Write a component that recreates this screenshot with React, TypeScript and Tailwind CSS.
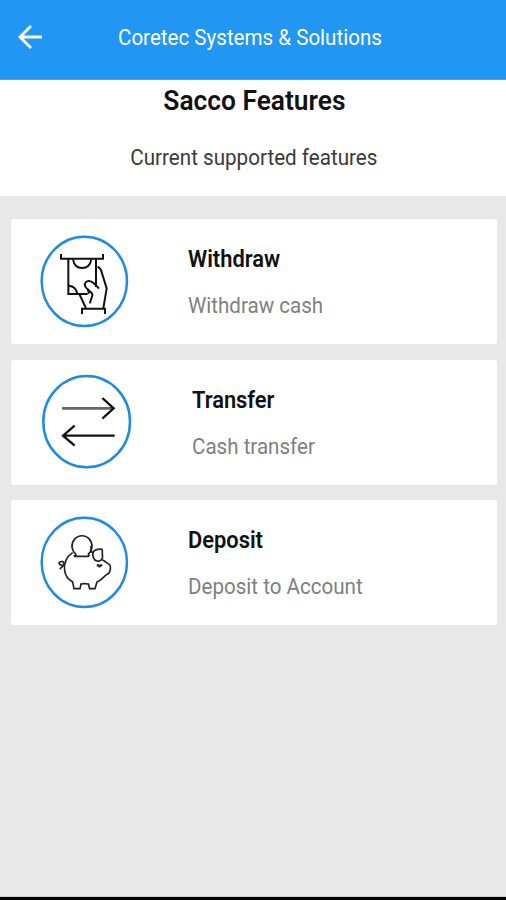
import React from 'react';

const WithdrawIcon = () => (
  <svg className="h-[110px] w-[110px] shrink-0" viewBox="0 0 330 330" fill="none" stroke="#111" strokeWidth="6">
    <ellipse cx="163" cy="169" rx="128" ry="134" stroke="#1f8ae3" strokeWidth="7.5" />
    <path d="M93 87v14h126V87" />
    <path d="M115 102v105h58M198 102v84" />
    <path d="M129 103c3 17 13 26 27 26s25-9 28-26" />
    <path d="M117 182c12 1 22 10 25 24" />
    <path d="M203 125c8 4 11 10 13 20l14 45-10 60" />
    <path d="M207 191c-9-10-17-21-28-23-9-2-17 6-14 15 3 10 20 16 22 25 1 9-6 15-7 27" />
    <path d="M173 192l4 14M148 207l20 43" />
    <path d="M156 267v-16h69v16" />
  </svg>
);

const TransferIcon = () => (
  <svg className="h-[110px] w-[110px] shrink-0" viewBox="0 0 330 330" fill="none" stroke="#111" strokeWidth="7">
    <ellipse cx="170" cy="170" rx="130" ry="137" stroke="#1f8ae3" strokeWidth="7.5" />
    <path d="M96 130h152" stroke="#666" strokeWidth="8" />
    <path d="M217 99l34 31-34 31" />
    <path d="M254 212H99M134 182l-35 30 35 30" />
  </svg>
);

const DepositIcon = () => (
  <svg className="h-[110px] w-[110px] shrink-0" viewBox="0 0 330 330" fill="none" stroke="#222" strokeWidth="5">
    <ellipse cx="163" cy="166" rx="128" ry="134" stroke="#1f8ae3" strokeWidth="7.5" />
    <path d="M138 142a30 31 0 1 1 36 0" />
    <path d="M131 148l9-5M133 148h44M174 142l5 5" />
    <path d="M128 137c-19 12-28 33-24 54 2 16 13 28 24 34l4 20h18l3-14c8-2 14-2 22 0l4 14h16l6-20c15-5 20-18 31-23 11-5 12-28 4-31-9-3-9-8-19-13" />
    <path d="M183 117v17l6 3M190 133c7-5 17-8 26-6 3 7-1 13 2 21-1 11-8 16-17 14-10-2-15-15-11-29" />
    <path d="M201 173l8 5 7-5" strokeWidth="7" />
    <path d="M104 177c-7-1-17-3-17-10 4-6 18-4 14 5-2 8-7 11-12 14" />
  </svg>
);

type Feature = {
  title: string;
  detail: string;
  icon: () => React.JSX.Element;
  iconClass: string;
  textClass: string;
};

const features: Feature[] = [
  { title: 'Withdraw', detail: 'Withdraw cash', icon: WithdrawIcon, iconClass: 'pt-[6px]', textClass: 'pl-12' },
  { title: 'Transfer', detail: 'Cash transfer', icon: TransferIcon, iconClass: 'pt-[5px]', textClass: 'pl-[52px]' },
  { title: 'Deposit', detail: 'Deposit to Account', icon: DepositIcon, iconClass: 'pt-[7px]', textClass: 'pl-12' },
];

const App = () => {
  return (
    <div className="flex h-[900px] w-full flex-col overflow-hidden bg-[#e8e8e8] font-['Roboto',sans-serif]">
      {/* App bar */}
      <header className="flex h-20 shrink-0 items-center border-b border-[#38aef5] bg-[#2196f3] pb-[5px] text-white">
        <svg className="mb-px ml-[18px] h-6 w-6 shrink-0" viewBox="0 0 24 24" fill="none" stroke="currentColor" strokeWidth="2.8">
          <path d="M24 12H2M13 1L2 12l11 11" />
        </svg>
        <h1 className="ml-[76px] origin-left scale-x-[0.935] text-[22px] whitespace-nowrap">Coretec Systems &amp; Solutions</h1>
      </header>

      {/* Page heading */}
      <section className="flex h-[116px] shrink-0 flex-col items-center bg-white">
        <h2 className="mt-[3px] ml-[2px] scale-x-[0.975] text-[27px] leading-9 font-semibold whitespace-nowrap text-[#111]">Sacco Features</h2>
        <p className="mt-[25px] ml-[2px] scale-x-[0.937] text-[22px] leading-7 whitespace-nowrap text-[#3a3a3a]">Current supported features</p>
      </section>

      {/* Feature cards */}
      <main className="flex flex-1 flex-col gap-[15.5px] pt-[23px] pr-[9px] pl-[11px]">
        {features.map(({ title, detail, icon: Icon, iconClass, textClass }) => (
          <div key={title} className="flex h-[125px] shrink-0 rounded-[3px] bg-white pl-[19px]">
            <div className={iconClass}>
              <Icon />
            </div>
            <div className={textClass}>
              <h3 className="mt-[27px] origin-left scale-x-[0.95] text-[23px] leading-7 font-semibold whitespace-nowrap text-[#111]">{title}</h3>
              <p className="mt-[18px] origin-left scale-x-[0.935] text-[22px] leading-7 whitespace-nowrap text-[#808080]">{detail}</p>
            </div>
          </div>
        ))}
      </main>

      <footer className="h-[4px] shrink-0 border-t border-[#ccc] bg-black" />
    </div>
  );
};

export default App;
